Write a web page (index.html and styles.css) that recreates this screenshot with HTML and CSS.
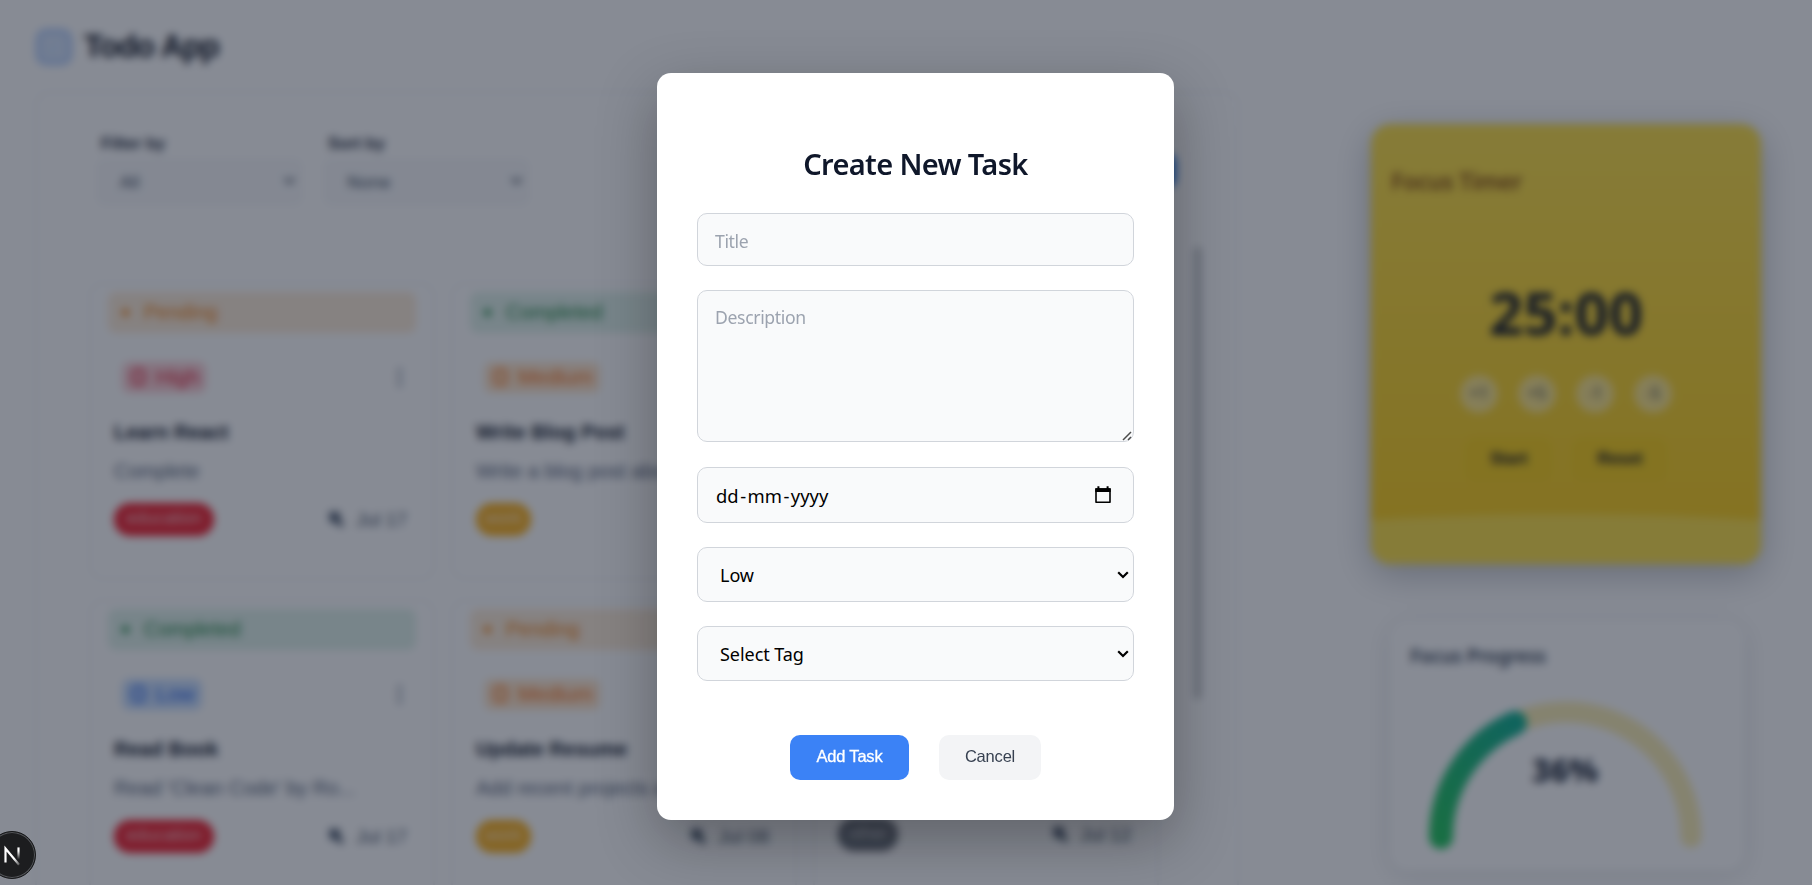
FILE: index.html
```html
<!DOCTYPE html>
<html lang="en">
<head>
<meta charset="utf-8">
<title>Todo App</title>
<link rel="stylesheet" href="styles.css">
</head>
<body>
<div class="app">
  <div class="main">
    <header class="header">
      <svg class="logo" viewBox="0 0 36 36"><rect x="2" y="2" width="32" height="32" rx="8" fill="#d6e4fb" stroke="#a6c5fa" stroke-width="4"/><path d="M11 18l5 5 9-10" fill="none" stroke="#bfdbfe" stroke-width="2"/></svg>
      <h1 class="brand">Todo App</h1>
    </header>
    <section class="board">
      <div class="toolbar">
        <div class="filter"><span class="filter-label">Filter by</span><div class="filter-box"><span>All</span><svg class="caret" viewBox="0 0 12 8"><path d="M1 1l5 5 5-5"/></svg></div></div>
        <div class="filter"><span class="filter-label">Sort by</span><div class="filter-box"><span>None</span><svg class="caret" viewBox="0 0 12 8"><path d="M1 1l5 5 5-5"/></svg></div></div>
        <button class="new-task">+ New Task</button>
      </div>
      <div class="list">
        <div class="cards">
          <article class="card">
            <div class="status pending"><i class="dot"></i>Pending</div>
            <div class="meta"><span class="prio high"><i class="sq"></i>High</span><span class="more">⋮</span></div>
            <h3 class="card-title">Learn React</h3><p class="desc">Complete</p>
            <div class="foot"><span class="tag red">education</span><span class="date"><svg class="tagicon" viewBox="0 0 18 18"><path d="M2 2h10v6l4 6-3 3-4-5H3z"/></svg><span>Jul 17</span></span></div>
          </article>
          <article class="card">
            <div class="status completed"><i class="dot"></i>Completed</div>
            <div class="meta"><span class="prio medium"><i class="sq"></i>Medium</span><span class="more">⋮</span></div>
            <h3 class="card-title">Write Blog Post</h3><p class="desc">Write a blog post abou...</p>
            <div class="foot"><span class="tag amber">work</span></div>
          </article>
          <article class="card"></article>
          <article class="card">
            <div class="status completed"><i class="dot"></i>Completed</div>
            <div class="meta"><span class="prio low"><i class="sq"></i>Low</span><span class="more">⋮</span></div>
            <h3 class="card-title">Read Book</h3><p class="desc">Read 'Clean Code' by Ro...</p>
            <div class="foot"><span class="tag red">education</span><span class="date"><svg class="tagicon" viewBox="0 0 18 18"><path d="M2 2h10v6l4 6-3 3-4-5H3z"/></svg><span>Jul 17</span></span></div>
          </article>
          <article class="card">
            <div class="status pending"><i class="dot"></i>Pending</div>
            <div class="meta"><span class="prio medium"><i class="sq"></i>Medium</span></div>
            <h3 class="card-title">Update Resume</h3><p class="desc">Add recent projects an...</p>
            <div class="foot"><span class="tag amber">work</span><span class="date"><svg class="tagicon" viewBox="0 0 18 18"><path d="M2 2h10v6l4 6-3 3-4-5H3z"/></svg><span>Jul 08</span></span></div>
          </article>
          <article class="card last">
            <div class="foot"><span class="tag grey">other</span><span class="date"><svg class="tagicon" viewBox="0 0 18 18"><path d="M2 2h10v6l4 6-3 3-4-5H3z"/></svg><span>Jul 12</span></span></div>
          </article>
        </div>
        <div class="scrollbar"></div>
      </div>
    </section>
  </div>
  <aside class="side">
    <section class="timer">
      <h2 class="timer-title">Focus Timer</h2>
      <div class="clock">25:00</div>
      <div class="steps"><span class="step">+1</span><span class="step">+5</span><span class="step">-1</span><span class="step">-5</span></div>
      <div class="controls"><span class="ctl">Start</span><span class="ctl">Reset</span></div>
      <svg class="wave" viewBox="0 0 390 51" preserveAspectRatio="none"><path d="M0 7Q195-5 390 7V51H0z" fill="#fde047"/></svg>
    </section>
    <section class="progress">
      <h2 class="progress-title">Focus Progress</h2>
      <svg class="gauge" viewBox="0 0 280 150">
        <defs><linearGradient id="g" x1="0" y1="1" x2="1" y2="0"><stop offset="0" stop-color="#22c55e"/><stop offset="1" stop-color="#10b090"/></linearGradient></defs>
        <path d="M15 137A125 125 0 0 1 265 137" fill="none" stroke="#fbeeb4" stroke-width="21" stroke-linecap="round"/>
        <path d="M15 137A125 125 0 0 1 89 23" fill="none" stroke="url(#g)" stroke-width="24" stroke-linecap="round"/>
        <text x="139" y="82" text-anchor="middle" class="gauge-text">36%</text>
      </svg>
    </section>
  </aside>
</div>

<div class="overlay">
  <div class="modal">
    <h2 class="modal-title">Create New Task</h2>
    <form class="form">
      <input class="field title-field" type="text" placeholder="Title">
      <div class="area">
        <textarea class="field desc-field" placeholder="Description"></textarea>
        <svg class="grip" viewBox="0 0 10 10"><path d="M1 9l8-8M6 9l3-3"/></svg>
      </div>
      <div class="field date-field"><span>dd<i class="sep">-</i>mm<i class="sep">-</i>yyyy</span>
        <svg class="cal" viewBox="0 0 16 18"><path d="M1 3h14v13.2H1z" fill="none" stroke="#000" stroke-width="1.6" stroke-linejoin="round"/><path d="M.3 2.2h15.4V6H.3zM2.4.3h2v2.4h-2zM11.6.3h2v2.4h-2z"/></svg>
      </div>
      <div class="field select-field"><span>Low</span><svg class="chev" viewBox="0 0 12 8"><path d="M1.200 1.200L6 6l4.800-4.800"/></svg></div>
      <div class="field select-field"><span>Select Tag</span><svg class="chev" viewBox="0 0 12 8"><path d="M1.200 1.200L6 6l4.800-4.800"/></svg></div>
      <div class="actions">
        <button class="btn primary" type="button">Add Task</button>
        <button class="btn" type="button">Cancel</button>
      </div>
    </form>
  </div>
</div>

<div class="dev-badge">
  <svg class="dev-mark" viewBox="0 0 24 24">
    <defs><linearGradient id="n1" x1="0" y1="0" x2="0" y2="1"><stop offset=".3" stop-color="#fff"/><stop offset="1" stop-color="#fff" stop-opacity="0"/></linearGradient>
    <linearGradient id="n2" gradientUnits="userSpaceOnUse" x1="12" y1="12" x2="20" y2="22"><stop offset=".3" stop-color="#fff"/><stop offset="1" stop-color="#fff" stop-opacity=".1"/></linearGradient></defs>
    <path d="M6 19V6l12.500 15" fill="none" stroke="url(#n2)" stroke-width="2"/>
    <rect x="17" y="5" width="2" height="11" fill="url(#n1)"/>
  </svg>
</div>
</body>
</html>
```
FILE: styles.css
```css
* { box-sizing: border-box; }
html, body { margin: 0; height: 100%; overflow: hidden; }
body { background: #fff; font-family: "Liberation Sans", Arial, sans-serif; color: #1e293b; }
h1, h2, h3, p { margin: 0; }

.app { display: flex; height: 885px; overflow: hidden; padding: 0 51px 0 35px; justify-content: space-between; }
.main { width: 1204px; }
.header { display: flex; align-items: center; gap: 12px; height: 91px; padding: 3px 0 0 1px; }
.logo { width: 36px; height: 36px; }
.brand { font-size: 31px; letter-spacing: -.8px; color: #0b1120; }

.board { height: 900px; border: 2px solid #f1f3f6; border-radius: 14px; padding: 41px 36px 0 52px; }
.toolbar { display: flex; gap: 14px; height: 148px; align-items: flex-start; }
.filter { display: flex; flex-direction: column; gap: 7px; width: 213px; padding-left: 8px; }
.filter-label { font-size: 16.500px; font-weight: 700; color: #1e293b; padding: 0 4px; line-height: 18px; }
.filter-box { display: flex; align-items: center; justify-content: space-between; height: 46px; padding: 0 5px 2px 21px; border-radius: 8px; background: #f8f9fb; border: 2px solid #f3f4f7; font-family: "Noto Sans", sans-serif; font-size: 17px; color: #334155; }
.caret { width: 11px; height: 8px; fill: none; stroke: #1e293b; stroke-width: 2; }
.new-task { margin: 20px 25px 0 auto; height: 33px; border: 0; border-radius: 8px; background: #1d75e8; color: #fff; padding: 0 20px; font-size: 16px; }
.list { display: flex; justify-content: space-between; }
.cards { display: grid; grid-template-columns: repeat(3, 346px); gap: 19px 16px; }
.card { height: 298px; border: 2px solid #f2f4f6; border-radius: 14px; padding: 8px 17px; }
.card.last { padding-top: 217px; }
.scrollbar { width: 7px; height: 452px; margin-top: -35px; background: #c4c6ca; border-radius: 4px; }
.status { display: flex; align-items: center; gap: 15px; height: 41px; padding-left: 14px; border-radius: 8px; font-size: 20px; }
.dot { width: 7px; height: 7px; border-radius: 50%; background: currentColor; }
.pending { background: #fdecd8; color: #f1800f; }
.completed { background: #e0f2ea; color: #1a853f; }
.meta { display: flex; align-items: center; justify-content: space-between; margin-top: 29px; height: 30px; padding: 0 6px 0 14px; }
.prio { display: flex; align-items: center; gap: 10px; height: 31px; padding: 0 7px 0 9px; border-radius: 8px; font-size: 21px; }
.sq { width: 15px; height: 18px; border: 4px solid currentColor; border-radius: 6px; opacity: .65; }
.high { background: #fbcfd5; color: #e21d38; }
.medium { background: #ffe6cc; color: #f97316; }
.low { background: #c8defe; color: #2563eb; }
.more { font-size: 21px; font-weight: 700; color: #64748b; }
.card-title { margin: 27px 0 0 6px; font-size: 20px; line-height: 26px; color: #0f172a; }
.desc { margin: 14px 0 0 6px; font-size: 20px; line-height: 24px; color: #56637a; white-space: nowrap; }
.foot { display: flex; align-items: center; justify-content: space-between; margin-top: 20px; padding: 0 9px 0 6px; }
.card.last .foot { margin-top: 0; }
.tag { height: 33px; line-height: 31px; padding: 0 12px; border-radius: 16px; color: rgba(255, 255, 255, .75); font-size: 17.500px; }
.red { background: #f01f2d; }
.amber { background: #fbb01a; padding: 0 9px; }
.grey { background: #666b74; padding: 0 10px; }
.date { display: flex; align-items: center; gap: 10px; font-size: 19px; color: #475569; }
.tagicon { width: 19px; height: 19px; fill: #475569; }

.side { width: 390px; padding-top: 124px; }
.timer { display: flex; flex-direction: column; align-items: center; height: 440px; border-radius: 20px; overflow: hidden; background: linear-gradient(#fde047, #facc15); box-shadow: 0 10px 36px rgba(15, 23, 42, .28); font-family: "Noto Sans", sans-serif; }
.timer-title { align-self: flex-start; margin: 40px 0 0 20px; font-size: 23px; line-height: 34px; font-weight: 600; letter-spacing: -.4px; color: #854d0e; }
.clock { margin-top: 81px; font-size: 60px; line-height: 66px; font-weight: 700; color: #1c1f24; }
.steps { display: flex; gap: 20px; margin-top: 30px; }
.step { width: 38px; height: 38px; border-radius: 50%; background: rgba(255, 255, 255, .45); text-align: center; line-height: 36px; font-size: 16px; color: #374151; }
.controls { display: flex; gap: 18px; margin-top: 24px; }
.ctl { height: 44px; padding: 0 26px; border-radius: 12px; background: #f8cf18; font: 700 17px/44px "Liberation Sans", sans-serif; letter-spacing: -.3px; color: #18181b; }
.wave { width: 100%; height: 51px; margin-top: auto; }
.progress { margin: 57px 17px 0 19px; height: 249px; border-radius: 18px; box-shadow: 0 4px 26px rgba(15, 23, 42, .12); padding: 21px 20px; background: #fff; }
.progress-title { font: 600 19px/28px "Noto Sans", sans-serif; letter-spacing: -.2px; color: #334155; }
.gauge { display: block; width: 280px; height: 150px; margin: 30px 0 0 16px; overflow: visible; }
.gauge-text { font: 800 32px "Noto Sans", sans-serif; fill: #1e293b; }

.overlay { position: fixed; inset: 0; display: flex; justify-content: center; align-items: flex-start; padding: 73px 0 0 19px; background: rgba(15, 23, 42, .5); backdrop-filter: blur(4px); }
.modal { width: 517px; height: 747px; padding: 68px 40px 0; border-radius: 14px; background: #fff; box-shadow: 0 20px 60px rgba(0, 0, 0, .3); font-family: "Noto Sans", sans-serif; }
.modal-title { height: 72px; font-size: 29px; line-height: 46px; font-weight: 600; letter-spacing: -.65px; text-align: center; color: #0f172a; }
.form { display: flex; flex-direction: column; }
.field { display: block; width: 100%; margin: 0 0 24px; border: 1px solid #d1d5db; border-radius: 10px; background: #f9fafb; font-family: "Noto Sans", sans-serif; font-size: 17.600px; color: #000; outline: 0; }
.field::placeholder { color: #9ca3af; letter-spacing: -.35px; }
.title-field { height: 53px; padding: 2px 17px 0; }
.area { position: relative; }
.desc-field { height: 152px; padding: 14px 17px; line-height: 24px; resize: none; }
.grip { position: absolute; right: 2px; bottom: 25px; width: 10px; height: 10px; fill: none; stroke: #4b4b4b; stroke-width: 1.500; }
.date-field { display: flex; align-items: center; justify-content: space-between; height: 56px; margin-top: 1px; padding: 0 22px 0 18px; font-size: 18.400px; }
.sep { font-style: normal; margin: 0 1.500px; }
.cal { width: 16px; height: 18px; margin-top: -1px; }
.select-field { display: flex; align-items: center; justify-content: space-between; height: 55px; padding: 0 4px 0 22px; font-size: 18px; letter-spacing: -.05px; }
.chev { width: 12px; height: 8px; fill: none; stroke: #000; stroke-width: 2.200; }
.actions { display: flex; justify-content: center; gap: 30px; margin-top: 30px; }
.btn { width: 102px; height: 45px; border: 0; border-radius: 10px; background: #f3f4f6; padding: 0 0 2px; font: 16.500px "Liberation Sans", Arial, sans-serif; letter-spacing: -.2px; color: #374151; }
.primary { width: 119px; background: #3b82f6; color: #fff; -webkit-text-stroke: .3px #fff; }

.dev-badge { position: fixed; left: -12px; top: 831px; width: 48px; height: 48px; border-radius: 50%; background: #1c1d1f; border: 1px solid #17181a; box-shadow: inset 0 0 0 1px #55575b; display: flex; align-items: center; justify-content: center; }
.dev-mark { width: 26px; height: 26px; }
```
